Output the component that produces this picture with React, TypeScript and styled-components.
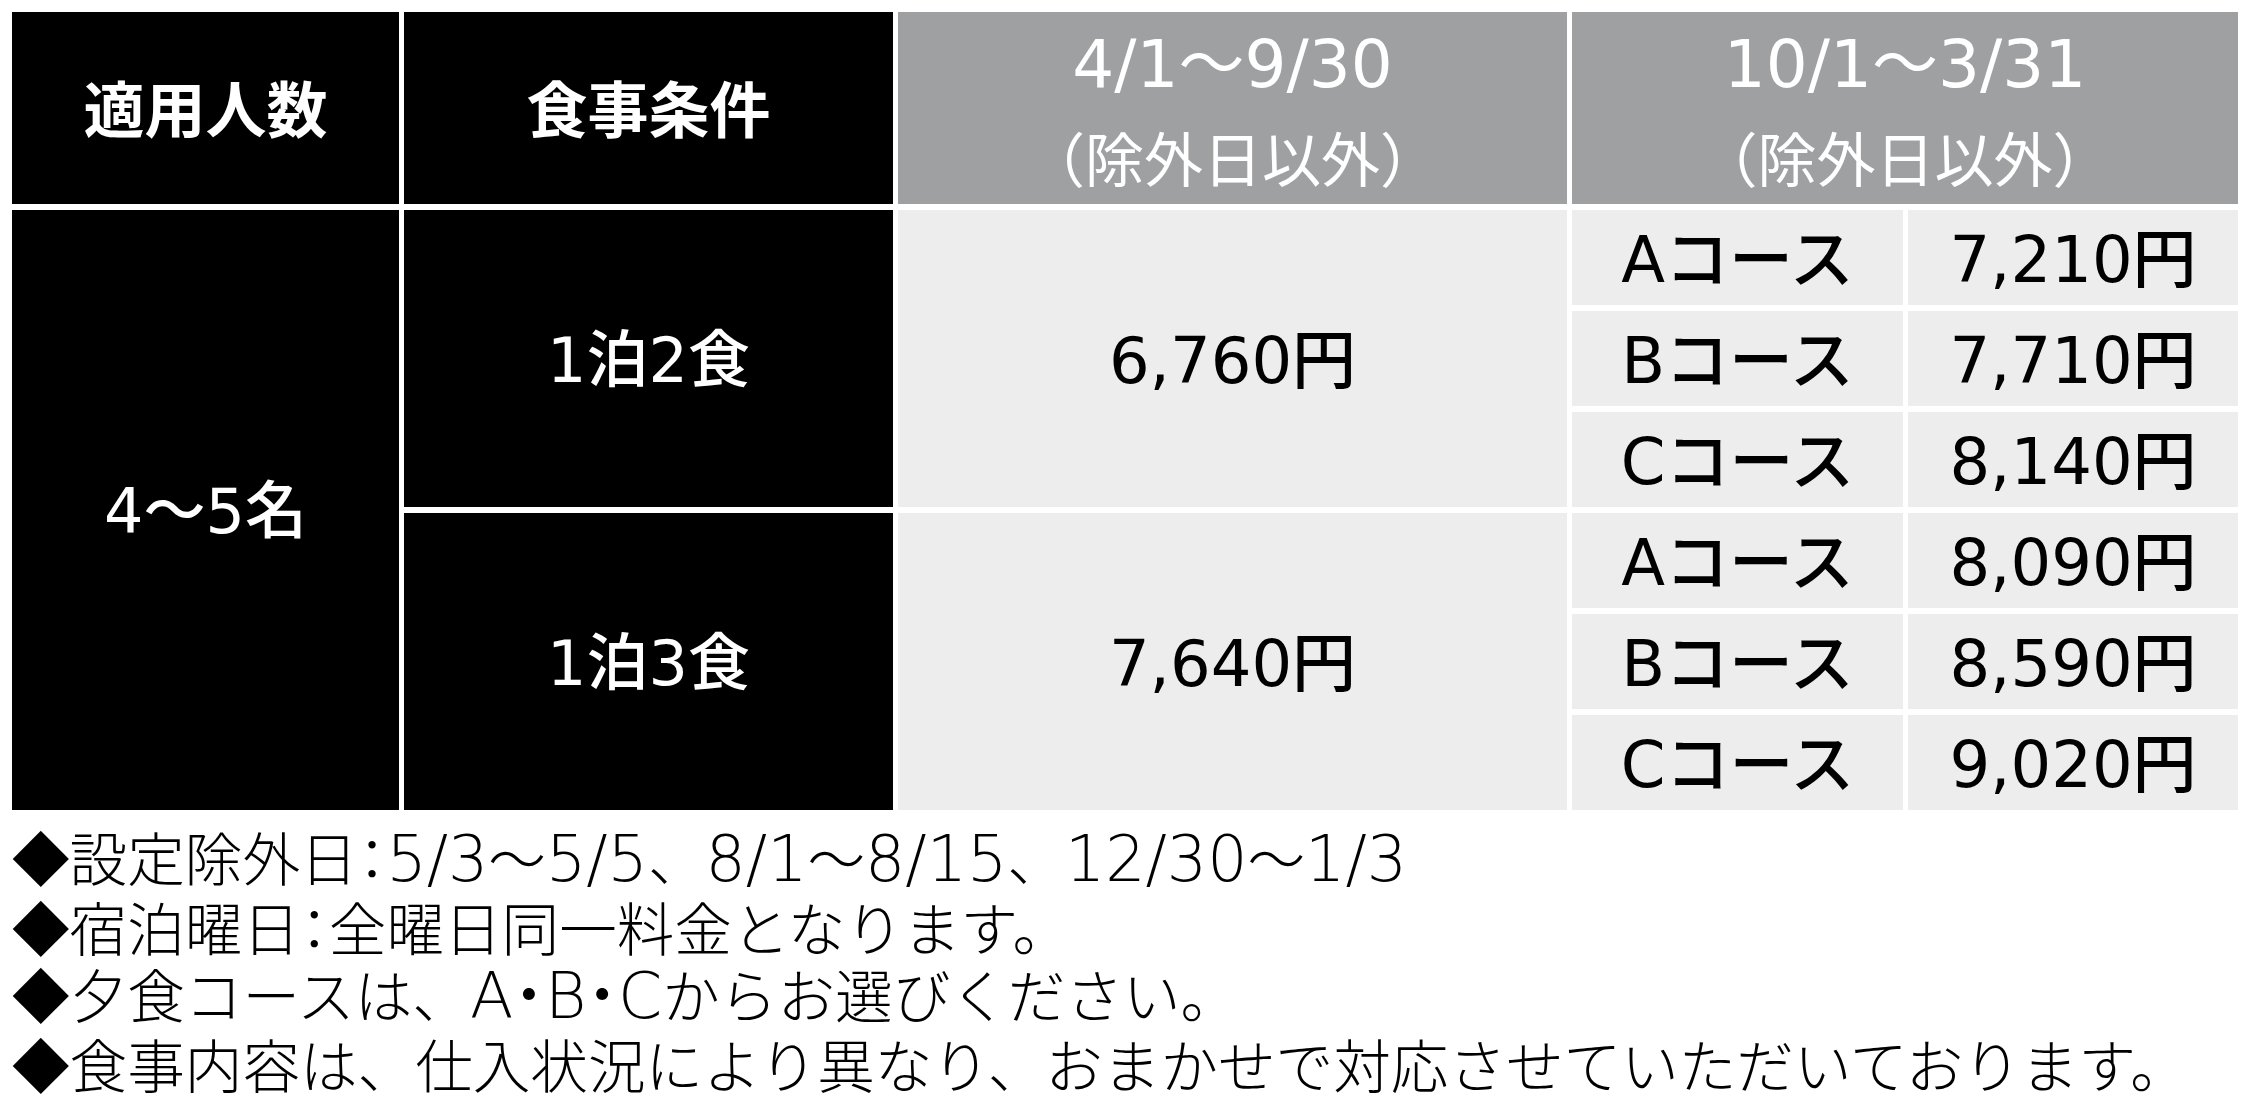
import React from "react";
import styled, { createGlobalStyle } from "styled-components";

const GlobalStyle = createGlobalStyle`
  html, body {
    margin: 0;
    padding: 0;
    background: #ffffff;
  }
  body {
    font-family: "Noto Sans CJK JP", sans-serif;
    color: #000000;
  }
`;

const Page = styled.div`
  padding: 12px 12px 0 12px;
  display: flex;
  flex-direction: column;
`;

const Grid = styled.div`
  display: grid;
  grid-template-columns: 387px 489px 669px 331px 330px;
  grid-template-rows: 192px repeat(6, 95px);
  column-gap: 5px;
  row-gap: 6px;
`;

const Cell = styled.div<{ $col: string; $row: string }>`
  grid-column: ${(p) => p.$col};
  grid-row: ${(p) => p.$row};
  display: flex;
  align-items: center;
  justify-content: center;
  text-align: center;
  box-sizing: border-box;
  font-family: "DejaVu Sans", "Noto Sans CJK JP", sans-serif;
`;

const DarkHead = styled(Cell)`
  background: #000000;
  color: #ffffff;
  font-family: "Noto Sans CJK JP", sans-serif;
  font-size: 61px;
  font-weight: 700;
  padding-bottom: 4px;
`;

const GrayHead = styled(Cell)`
  background: #9fa0a2;
  color: #ffffff;
  flex-direction: column;
  padding-top: 6px;
`;

const Period = styled.span`
  font-size: 66px;
  font-weight: 400;
  line-height: 92px;
`;

const Exclusion = styled.span`
  font-family: "Noto Sans CJK JP", sans-serif;
  font-size: 59px;
  font-weight: 400;
  line-height: 92px;
`;

const DarkBody = styled(Cell)`
  background: #000000;
  color: #ffffff;
  font-size: 62px;
  font-weight: 500;
  padding-bottom: 8px;
`;

const LightBody = styled(Cell)`
  background: #ededed;
  color: #000000;
  font-size: 64px;
  font-weight: 500;
  padding-bottom: 8px;
`;

const Notes = styled.ul`
  list-style: none;
  margin: 13px 0 0 0;
  padding: 0;
  font-family: "Noto Sans CJK JP", sans-serif;
  font-size: 57.6px;
  font-weight: 300;
  line-height: 67px;
  white-space: nowrap;
`;

const Note = styled.li`
  margin: 0;
`;

const Latin = styled.span`
  font-family: "DejaVu Sans", "Noto Sans CJK JP", sans-serif;
  font-size: 1.1em;
  font-weight: 200;
  font-feature-settings: "halt";
`;

const Colon = styled.span`
  font-feature-settings: "halt";
`;

const RUN = /([0-9A-Za-z/,・]+|：)/;

function Mixed({ text }: { text: string }) {
  return (
    <>
      {text.split(RUN).map((part, i) => {
        if (i % 2 === 0) return <React.Fragment key={i}>{part}</React.Fragment>;
        if (part === "：") return <Colon key={i}>{part}</Colon>;
        return <Latin key={i}>{part}</Latin>;
      })}
    </>
  );
}

type Course = { name: string; price: string };

const plans: { meal: string; price: string; courses: Course[] }[] = [
  {
    meal: "1泊2食",
    price: "6,760円",
    courses: [
      { name: "Aコース", price: "7,210円" },
      { name: "Bコース", price: "7,710円" },
      { name: "Cコース", price: "8,140円" },
    ],
  },
  {
    meal: "1泊3食",
    price: "7,640円",
    courses: [
      { name: "Aコース", price: "8,090円" },
      { name: "Bコース", price: "8,590円" },
      { name: "Cコース", price: "9,020円" },
    ],
  },
];

const notes = [
  "◆設定除外日：5/3〜5/5、8/1〜8/15、12/30〜1/3",
  "◆宿泊曜日：全曜日同一料金となります。",
  "◆夕食コースは、A・B・Cからお選びください。",
  "◆食事内容は、仕入状況により異なり、おまかせで対応させていただいております。",
];

export default function App() {
  return (
    <>
      <GlobalStyle />
      <Page>
        <Grid>
          <DarkHead $col="1" $row="1">適用人数</DarkHead>
          <DarkHead $col="2" $row="1">食事条件</DarkHead>
          <GrayHead $col="3" $row="1">
            <Period>4/1〜9/30</Period>
            <Exclusion>（除外日以外）</Exclusion>
          </GrayHead>
          <GrayHead $col="4 / span 2" $row="1">
            <Period>10/1〜3/31</Period>
            <Exclusion>（除外日以外）</Exclusion>
          </GrayHead>
          <DarkBody $col="1" $row="2 / span 6">4〜5名</DarkBody>
          {plans.map((plan, i) => {
            const start = 2 + i * 3;
            return (
              <React.Fragment key={plan.meal}>
                <DarkBody $col="2" $row={`${start} / span 3`}>{plan.meal}</DarkBody>
                <LightBody $col="3" $row={`${start} / span 3`}>{plan.price}</LightBody>
                {plan.courses.map((c, j) => (
                  <React.Fragment key={c.name}>
                    <LightBody $col="4" $row={`${start + j}`}>{c.name}</LightBody>
                    <LightBody $col="5" $row={`${start + j}`}>{c.price}</LightBody>
                  </React.Fragment>
                ))}
              </React.Fragment>
            );
          })}
        </Grid>
        <Notes>
          {notes.map((n) => (
            <Note key={n}>
              <Mixed text={n} />
            </Note>
          ))}
        </Notes>
      </Page>
    </>
  );
}
